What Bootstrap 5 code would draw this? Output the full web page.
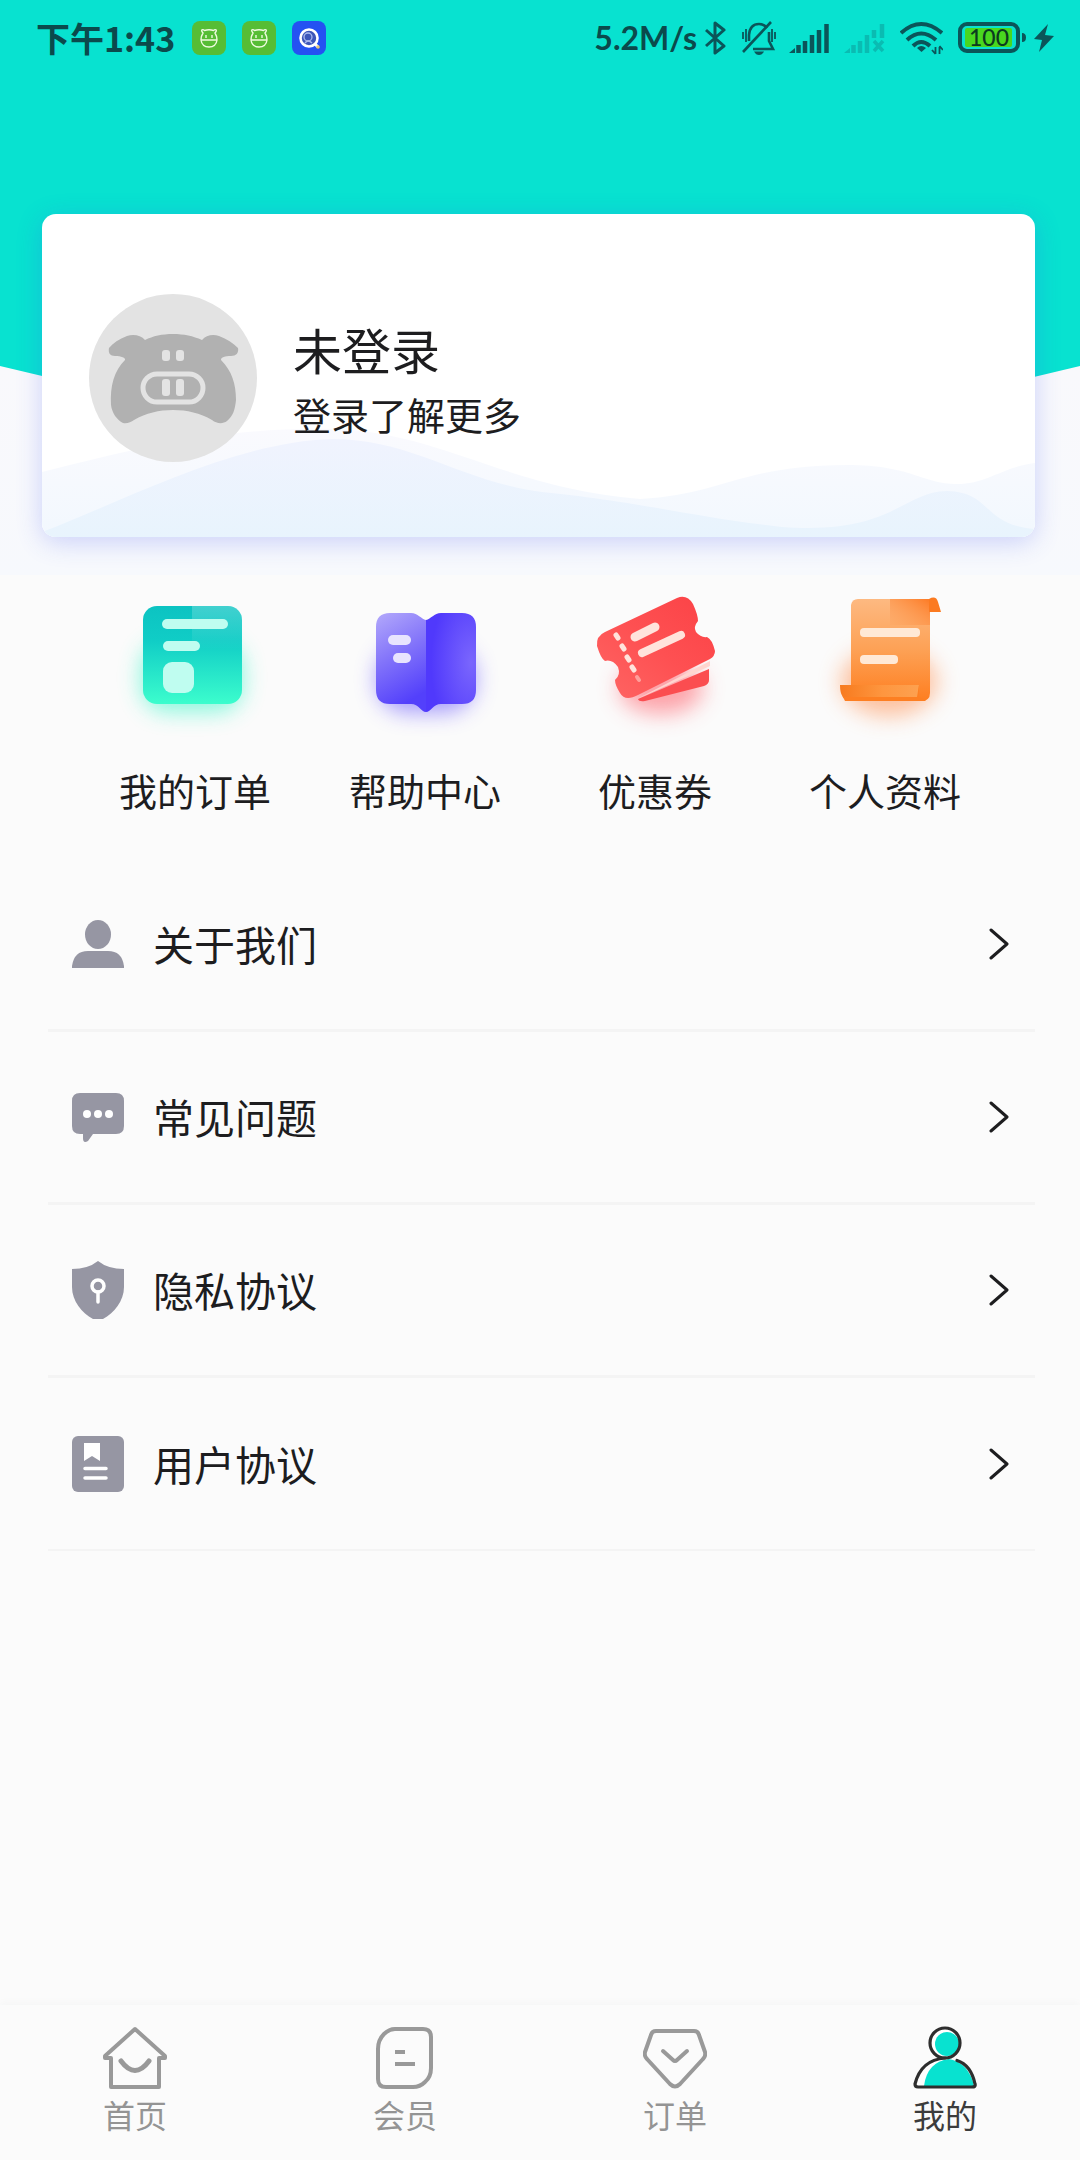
<!DOCTYPE html>
<html lang="zh-CN">
<head>
<meta charset="utf-8">
<meta name="viewport" content="width=device-width, initial-scale=1">
<title>我的</title>
<link href="https://cdn.jsdelivr.net/npm/bootstrap@5.3.0/dist/css/bootstrap.min.css" rel="stylesheet">
<style>
  :root { --teal: #08e2d0; --page: #fbfbfb; --ink: #1d1d1f; --slate: #9696a3; --mute: #949494; }
  body { background: var(--page); color: var(--ink); font-family: "Noto Sans CJK SC", "Noto Sans", sans-serif; }
  svg { display: block; flex: none; }
  a { color: inherit; text-decoration: none; }

  .hero { height: 494px; background: var(--teal); clip-path: polygon(0 0, 100% 0, 100% 366px, 50% 100%, 0 366px); }
  .status { height: 76px; padding: 0 26px 0 36px; color: #0b4a4c; line-height: 40px; }
  .status-time { font-size: 34px; font-weight: 700; margin-right: 17px; }
  .status-apps { gap: 16px; }
  .status-rate { font-family: Lato, sans-serif; font-size: 32px; font-weight: 700; margin-right: 8px; }
  .status-icons svg { margin-right: 15px; }
  .status-icons svg.bell { margin-right: 12px; }
  .status-icons svg.cell { margin-right: 7px; }
  .status-icons svg:last-child { margin-right: 0; }

  .halo { display: flow-root; background: linear-gradient(#f9f9fc, #f7f9fd); margin-top: -128px; padding: 0 45px 38px 42px; }
  .profile-wrap { position: relative; z-index: 1; margin-top: -152px; border-radius: 14px; box-shadow: 0 5px 26px rgba(60, 80, 240, .24); }
  .profile { min-height: 323px; padding: 0 47px; border: 0; border-radius: 14px; background: #fff; overflow: hidden; }
  .waves { position: absolute; left: 0; bottom: 0; width: 100%; height: 120px; }
  .profile-row { min-height: 323px; gap: 36px; padding-top: 4px; }
  .profile-name { font-size: 49px; line-height: 72px; font-weight: 400; margin: 0; }
  .profile-hint { font-size: 38px; line-height: 58px; margin: 0; }

  .shortcuts { padding: 5px 80px 0; }
  .shortcuts a { font-size: 38px; line-height: 58px; gap: 21px; }

  .menu { margin: 40px 45px 0 48px; }
  .menu .list-group-item { height: 173px; padding: 0 26px 0 24px; gap: 29px; background: transparent; border-color: #f4f4f4; border-width: 0 0 3px; color: var(--ink); font-size: 41px; line-height: 60px; }
  .menu .list-group-item:last-child { border-width: 0 0 2px; }
  .menu .list-group-item span { padding-bottom: 2px; }

  .tabs { height: 155px; padding-top: 20px; background: var(--page); box-shadow: 0 -3px 8px rgba(0, 0, 0, .025); }
  .tabs a { color: var(--mute); font-size: 32px; line-height: 46px; }
  .tabs a.active { color: #3c3c3c; }
</style>
<script src="https://cdn.jsdelivr.net/npm/bootstrap@5.3.0/dist/js/bootstrap.bundle.min.js"></script>
</head>
<body class="min-vh-100 d-flex flex-column">

<header class="hero">
  <div class="status d-flex align-items-center justify-content-between">
    <div class="d-flex align-items-center">
      <span class="status-time">下午1:43</span>
      <div class="status-apps d-flex">
        <svg width="34" height="34" viewBox="0 0 34 34"><rect width="34" height="34" rx="8" fill="#56bd35"/><g fill="none" stroke="#effbe0" stroke-width="1.400"><path d="M11 12 C8.500 9 10 7.500 12.500 9.500 Q17 8 21.500 9.500 C24 7.500 25.500 9 23 12 Q25 15 25 19 Q24 26 17 26 Q10 26 9 19 Q9 15 11 12Z"/><path d="M9 19H25M14 14v3M20 14v3"/></g></svg>
        <svg width="34" height="34" viewBox="0 0 34 34"><rect width="34" height="34" rx="8" fill="#56bd35"/><g fill="none" stroke="#effbe0" stroke-width="1.400"><path d="M11 12 C8.500 9 10 7.500 12.500 9.500 Q17 8 21.500 9.500 C24 7.500 25.500 9 23 12 Q25 15 25 19 Q24 26 17 26 Q10 26 9 19 Q9 15 11 12Z"/><path d="M9 19H25M14 14v3M20 14v3"/></g></svg>
        <svg width="34" height="34" viewBox="0 0 34 34"><rect width="34" height="34" rx="8" fill="#2452f2"/><circle cx="17" cy="17" r="8.500" fill="#3c56b8" stroke="#fff" stroke-width="2.600"/><circle cx="16" cy="16" r="4" fill="none" stroke="#a9b8ee" stroke-width="1.300"/><path d="M13 22Q16 18 20 22" fill="none" stroke="#a9b8ee" stroke-width="1.300"/><path d="M23 23l3 3" stroke="#fff" stroke-width="3"/><circle cx="26" cy="26" r="1.800" fill="#e7c878"/></svg>
      </div>
    </div>
    <div class="status-icons d-flex align-items-center">
      <span class="status-rate">5.2M/s</span>
      <svg width="21" height="34" viewBox="0 0 21 34" fill="none" stroke="#0b5559" stroke-width="3" stroke-linejoin="round"><path d="M1 9L19 25L10 32V2L19 9L1 25"/></svg>
      <svg class="bell" width="36" height="34" viewBox="0 0 36 34" fill="none" stroke="#0b5559" stroke-width="2.600"><path d="M8 20V14Q9 3 18 3Q23 3 26 7M28 11V20L32 28H12"/><path d="M2 31L30 1"/><path d="M2 11v7M5 8v13M34 11v7M31 8v13" stroke-width="1.800"/><path d="M13 30.500H23Q21 34 18 34Q15 34 13 30.500Z" fill="#0b5559" stroke="none"/></svg>
      <svg width="40" height="30" viewBox="0 0 40 30" stroke="#0b5559" stroke-width="4.500"><path d="M9.500 22v8M16 18v12M23 12v18M30 7v23M37.500 1v29"/><path d="M0 30l6-5v5z" fill="#0b5559" stroke="none"/></svg>
      <svg width="41" height="30" viewBox="0 0 41 30" stroke="#0abcb2" stroke-width="4.500"><path d="M9.500 22v8M16 18v12M23 12v18M30 7v8M38 1v14"/><path d="M30 18l9 10M39 18l-9 10" stroke-width="3.500"/><path d="M0 30l6-5v5z" fill="#0abcb2" stroke="none"/></svg>
      <svg width="43" height="34" viewBox="0 0 43 34" fill="none" stroke="#0b5559" stroke-width="4"><path d="M1 12Q21-6 42 12M7 19Q21 6 36 19M13 25Q21 17 30 25"/><path d="M21.500 31L17 27Q21 23 26 27Z" fill="#0b5559" stroke="none"/><path d="M35.500 26v7M32 29l3.500 4M39.500 33v-7M43 29l-3.500-4" stroke-width="1.800"/></svg>
      <svg class="cell" width="69" height="32" viewBox="0 0 69 32"><rect x="2" y="2" width="58" height="27" rx="7" fill="none" stroke="#0b5559" stroke-width="4"/><rect x="7" y="6" width="47" height="19" rx="2" fill="#49d71f"/><path d="M64 11q4 0 4 4.500t-4 4.500z" fill="#0b5559"/><text x="31" y="24" text-anchor="middle" font-family="Lato, sans-serif" font-size="23" font-weight="500" fill="#0b3a20">100</text></svg>
      <svg width="20" height="28" viewBox="0 0 20 28" fill="#0b5559"><path d="M14 0L0 15L8 16L5 28L20 12L11 11Z"/></svg>
    </div>
  </div>
</header>

<main>
  <section class="halo">
    <div class="profile-wrap">
      <a href="#login" class="card profile">
        <svg class="waves" viewBox="0 0 993 120" preserveAspectRatio="none">
          <defs>
            <linearGradient id="wv" x1="0" y1="0" x2="0" y2="1"><stop offset="0" stop-color="#f0f3fe"/><stop offset="1" stop-color="#e8f4fd"/></linearGradient>
            <linearGradient id="wl" x1="0" y1="0" x2="0" y2="1"><stop offset="0" stop-color="#fafafe"/><stop offset="1" stop-color="#f2f8fe"/></linearGradient>
          </defs>
          <path d="M0 55 C100 30 180 10 290 12 C400 15 460 70 598 82 C680 78 700 48 805 48 C870 48 880 67 915 67 C945 67 960 50 993 46 V120 H0Z" fill="url(#wl)"/>
          <path d="M0 115 C80 85 190 25 290 22 C370 22 420 65 500 75 C600 85 650 100 740 110 C850 118 860 75 905 74 C950 75 940 108 993 112 V120 H0Z" fill="url(#wv)"/>
        </svg>
        <div class="profile-row d-flex align-items-center position-relative">
          <svg width="168" height="168" viewBox="0 0 168 168">
            <circle cx="84" cy="84" r="84" fill="#e3e3e3"/>
            <path fill="#b1b1b1" d="M84 40C73 40 64 42 56 46C52 41 44 40 38 42C30 45 24 49 20 54C19 59 21 62 26 62C32 62 37 64 36 66C25 77 21 92 22 111C23 119 28 126 34 129C38 130 42 128 45 126C57 119 70 116 84 116C98 116 111 119 123 126C128 130 134 130 138 127C144 122 146 116 147 106C147 90 143 77 132 66C132 63 136 62 142 62C147 62 150 59 149 54C144 49 138 45 130 42C124 40 117 41 113 46C104 42 95 40 84 40Z"/>
            <g fill="#e3e3e3"><rect x="73" y="56" width="8" height="11" rx="3"/><rect x="87" y="56" width="8" height="11" rx="3"/><rect x="73" y="85" width="8" height="17" rx="3"/><rect x="87" y="85" width="8" height="17" rx="3"/></g>
            <rect x="54" y="80" width="60" height="28" rx="14" fill="none" stroke="#e3e3e3" stroke-width="5"/>
          </svg>
          <div>
            <h1 class="profile-name">未登录</h1>
            <p class="profile-hint">登录了解更多</p>
          </div>
        </div>
      </a>
    </div>
  </section>

  <nav class="shortcuts row row-cols-4 g-0">
    <a href="#orders" class="col d-flex flex-column align-items-center">
      <svg width="160" height="160" viewBox="0 0 160 160">
        <defs>
          <linearGradient id="g1" x1="0" y1="0" x2="0" y2="1"><stop offset="0" stop-color="#0cc3c2"/><stop offset=".35" stop-color="#10cdc6"/><stop offset="1" stop-color="#3cfdcd"/></linearGradient>
          <linearGradient id="g1b" x1="0" y1="0" x2="0" y2="1"><stop offset="0" stop-color="#fff" stop-opacity=".22"/><stop offset="1" stop-color="#fff" stop-opacity="0"/></linearGradient>
          <filter id="soft" x="-50%" y="-50%" width="200%" height="200%"><feGaussianBlur stdDeviation="11"/></filter>
        </defs>
        <rect x="26" y="62" width="102" height="70" rx="26" fill="#3cf5c8" opacity=".6" filter="url(#soft)"/>
        <rect x="28" y="26" width="99" height="98" rx="14" fill="url(#g1)"/>
        <path d="M77 26h36q14 0 14 14v30H77z" fill="url(#g1b)"/>
        <g fill="#bffdf0"><rect x="47" y="39" width="66" height="10" rx="5"/><rect x="48" y="61" width="37" height="10" rx="5"/><rect x="48" y="82" width="31" height="31" rx="9"/></g>
      </svg>
      <span>我的订单</span>
    </a>
    <a href="#help" class="col d-flex flex-column align-items-center">
      <svg width="160" height="160" viewBox="0 0 160 160">
        <defs>
          <linearGradient id="g2" x1="0" y1="0" x2=".3" y2="1"><stop offset="0" stop-color="#b3a9fb"/><stop offset=".5" stop-color="#8273fa"/><stop offset="1" stop-color="#5340fb"/></linearGradient>
          <radialGradient id="g2b" cx=".9" cy=".5" r=".8"><stop offset="0" stop-color="#7a66fd"/><stop offset="1" stop-color="#5039fc"/></radialGradient>
        </defs>
        <rect x="32" y="66" width="98" height="66" rx="30" fill="#5a47fb" opacity=".55" filter="url(#soft)"/>
        <path d="M45 33H66C73 33 76 39 81 40V132C76 132 74 124 66 124H45Q31 124 31 110V47Q31 33 45 33Z" fill="url(#g2)"/>
        <path d="M117 33H96C89 33 86 39 81 40V132C86 132 88 124 96 124H117Q131 124 131 110V47Q131 33 117 33Z" fill="url(#g2b)"/>
        <g fill="#e8e4fe"><rect x="43" y="55" width="23" height="10" rx="5"/><rect x="48" y="73" width="18" height="10" rx="5"/></g>
      </svg>
      <span>帮助中心</span>
    </a>
    <a href="#coupons" class="col d-flex flex-column align-items-center">
      <svg width="160" height="160" viewBox="0 0 160 160">
        <defs><linearGradient id="g3" x1="1" y1="0" x2="0" y2="1"><stop offset="0" stop-color="#fb4246"/><stop offset=".5" stop-color="#fe5052"/><stop offset="1" stop-color="#fe6664"/></linearGradient></defs>
        <ellipse cx="86" cy="108" rx="42" ry="26" fill="#ff4c58" opacity=".5" filter="url(#soft)"/>
        <path d="M63 119L134 89V100Q134 104 129 106L70 121Q64 122 63 119Z" fill="#fb4d50"/>
        <path d="M30 52L102 18Q112 14 118 24Q123 35 123 41Q118 47 121 52Q126 58 132 57Q137 59 140 71Q140 76 135 79L63 115Q50 122 45 113Q40 105 40 100Q46 95 43 87Q37 79 30 81Q26 79 22 66Q21 56 30 52Z" fill="url(#g3)"/>
        <path d="M62 119L135 81V86Q96 104 62 119Z" fill="#ffd5cf"/>
        <g stroke="#ffe3dc" stroke-linecap="round" fill="none"><path d="M60 57L80 47" stroke-width="9"/><path d="M67 73L106 55" stroke-width="8"/><path d="M41 55l2 3M47 66l2 3M52 77l2 3M57 87l2 3" stroke-width="5"/><path d="M62 97l2 3" stroke-width="4" opacity=".5"/></g>
      </svg>
      <span>优惠券</span>
    </a>
    <a href="#profile" class="col d-flex flex-column align-items-center">
      <svg width="160" height="160" viewBox="0 0 160 160">
        <defs>
          <linearGradient id="g4" x1="0" y1="0" x2="0" y2="1"><stop offset="0" stop-color="#fdb981"/><stop offset=".5" stop-color="#fda155"/><stop offset="1" stop-color="#fe7e20"/></linearGradient>
          <linearGradient id="g4b" x1="1" y1="0" x2="0" y2="1"><stop offset="0" stop-color="#fd7a24"/><stop offset="1" stop-color="#fda561" stop-opacity=".3"/></linearGradient>
          <linearGradient id="g4c"><stop offset="0" stop-color="#f77a1e"/><stop offset=".5" stop-color="#fe963f"/><stop offset="1" stop-color="#fda353"/></linearGradient>
        </defs>
        <ellipse cx="84" cy="102" rx="48" ry="34" fill="#ff8540" opacity=".5" filter="url(#soft)"/>
        <path d="M53 19H125V113Q125 121 116 121H46V25Q47 19 53 19Z" fill="url(#g4)"/>
        <path d="M85 19H125V45H85Z" fill="url(#g4b)"/>
        <path d="M124 19Q131 15 133 22L136 32H124Z" fill="#fb7a20"/>
        <path d="M35 105H114Q112 121 120 121H45Q35 120 35 105Z" fill="url(#g4c)"/>
        <path d="M114 105V114Q115 121 122 119L120 121H40L38 117H112Z" fill="#fd7f22"/>
        <g fill="#ffe9d6"><rect x="55" y="48" width="60" height="9" rx="4"/><rect x="55" y="75" width="38" height="9" rx="4"/></g>
      </svg>
      <span>个人资料</span>
    </a>
  </nav>

  <div class="menu list-group list-group-flush">
    <a href="#about" class="list-group-item d-flex align-items-center">
      <svg width="52" height="48" viewBox="0 0 52 48" fill="#9696a3"><ellipse cx="26" cy="14.500" rx="13" ry="14.500"/><path d="M0 48V46Q2 31 16 31H36Q50 31 52 46V48Z"/></svg>
      <span class="flex-grow-1">关于我们</span>
      <svg width="20" height="32" viewBox="0 0 20 32" fill="none" stroke="#1d1d1f" stroke-width="3" stroke-linecap="round" stroke-linejoin="round"><path d="M2 2L18 16L2 30"/></svg>
    </a>
    <a href="#faq" class="list-group-item d-flex align-items-center">
      <svg width="52" height="49" viewBox="0 0 52 49" fill="#9696a3"><path d="M8 0H44Q52 0 52 8V33Q52 41 44 41H21L16 48Q11 51 11 45V41H8Q0 41 0 33V8Q0 0 8 0Z"/><g fill="#fff"><circle cx="15" cy="21" r="4"/><circle cx="26" cy="21" r="4"/><circle cx="37" cy="21" r="4"/></g></svg>
      <span class="flex-grow-1">常见问题</span>
      <svg width="20" height="32" viewBox="0 0 20 32" fill="none" stroke="#1d1d1f" stroke-width="3" stroke-linecap="round" stroke-linejoin="round"><path d="M2 2L18 16L2 30"/></svg>
    </a>
    <a href="#privacy" class="list-group-item d-flex align-items-center">
      <svg width="52" height="58" viewBox="0 0 52 58"><path fill="#9696a3" d="M26 0Q36 8 52 8V26C52 40 42 52 31 58H21C10 52 0 40 0 26V8Q16 8 26 0Z"/><g fill="none" stroke="#fff" stroke-width="3.500" stroke-linecap="round"><circle cx="26" cy="25" r="6"/><path d="M26 31V41"/></g></svg>
      <span class="flex-grow-1">隐私协议</span>
      <svg width="20" height="32" viewBox="0 0 20 32" fill="none" stroke="#1d1d1f" stroke-width="3" stroke-linecap="round" stroke-linejoin="round"><path d="M2 2L18 16L2 30"/></svg>
    </a>
    <a href="#terms" class="list-group-item d-flex align-items-center">
      <svg width="52" height="56" viewBox="0 0 52 56"><rect width="52" height="56" rx="6" fill="#9696a3"/><path d="M12 7H28V25L20 20L12 25Z" fill="#fff"/><path d="M13 32.500H34M13 42H34" stroke="#fff" stroke-width="3.500" stroke-linecap="round"/></svg>
      <span class="flex-grow-1">用户协议</span>
      <svg width="20" height="32" viewBox="0 0 20 32" fill="none" stroke="#1d1d1f" stroke-width="3" stroke-linecap="round" stroke-linejoin="round"><path d="M2 2L18 16L2 30"/></svg>
    </a>
  </div>
</main>

<nav class="tabs mt-auto row row-cols-4 g-0">
  <a href="#home" class="col d-flex flex-column align-items-center">
    <svg width="64" height="66" viewBox="0 0 64 66" fill="none" stroke="#999" stroke-width="4" stroke-linejoin="round" stroke-linecap="round"><path d="M8 33H2V31L32 4L62 31V33H56V62H8Z"/><path d="M18 36Q32 55 46 36" stroke-width="5"/></svg>
    <span>首页</span>
  </a>
  <a href="#member" class="col d-flex flex-column align-items-center">
    <svg width="64" height="66" viewBox="0 0 64 66" fill="none" stroke="#999" stroke-width="4"><path d="M22 4H50Q58 4 58 12V43Q58 52 52 57Q47 62 40 62H13Q5 62 5 54V24Q5 15 11 9Q16 4 22 4Z"/><path d="M22 27H32M22 39H42"/></svg>
    <span>会员</span>
  </a>
  <a href="#order" class="col d-flex flex-column align-items-center">
    <svg width="64" height="66" viewBox="0 0 64 66" fill="none" stroke="#999" stroke-width="4" stroke-linejoin="round" stroke-linecap="round"><path d="M13 6H51Q55 6 56 10L62 27Q63 31 60 34L37 59Q32 64 27 59L4 34Q1 31 2 27L8 10Q9 6 13 6Z"/><path d="M20 26L30 35Q32 37 34 35L44 26"/></svg>
    <span>订单</span>
  </a>
  <a href="#me" class="active col d-flex flex-column align-items-center" aria-current="page">
    <svg width="64" height="66" viewBox="0 0 64 66"><circle cx="32" cy="18" r="15" fill="#fff"/><circle cx="34" cy="19" r="12" fill="#08e2d0"/><path d="M4 62Q8 35 32 34Q56 35 60 62Z" fill="#fff"/><path d="M11 61Q14 37 36 34Q56 38 61 61Z" fill="#08e2d0"/><g fill="none" stroke="#2e2e2e" stroke-width="3.200" stroke-linecap="round" stroke-linejoin="round"><circle cx="32" cy="18" r="15"/><path d="M32 33Q8 35 2 59Q2 62 5 62H59Q63 62 62 59Q58 40 44 35.500"/></g></svg>
    <span>我的</span>
  </a>
</nav>
</body>
</html>
